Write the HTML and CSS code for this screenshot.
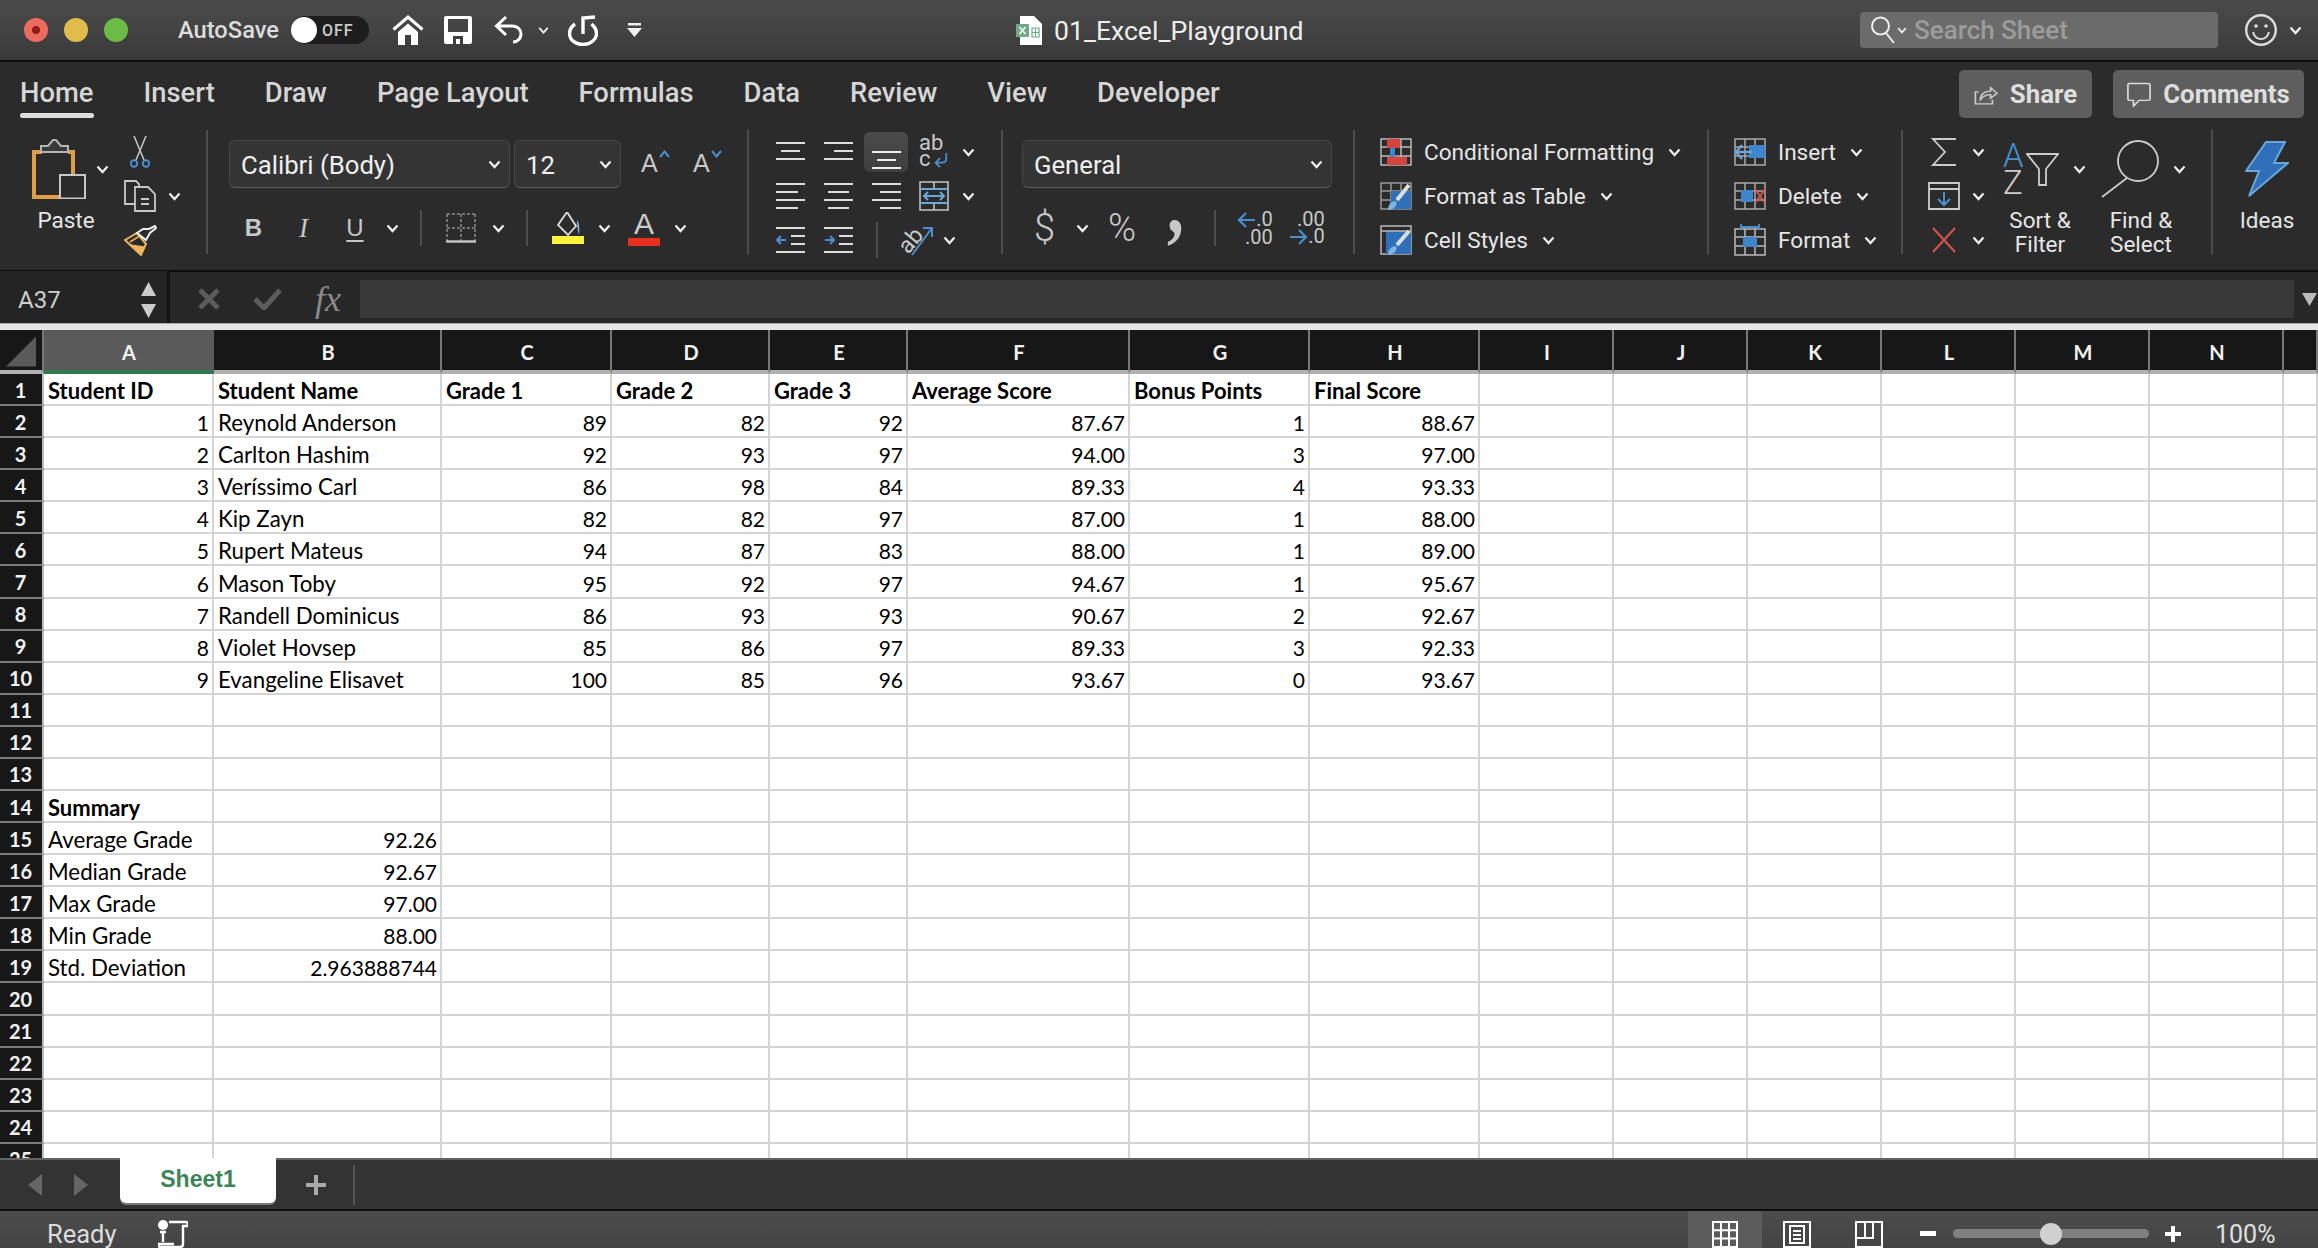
FILE: index.html
```html
<!DOCTYPE html>
<html>
<head>
    <meta charset="UTF-8">
    <title>01_Excel_Playground</title>
    <link rel="stylesheet" href="styles.css">
</head>
<body>

    <svg class="defs">
        <symbol id="chev" viewBox="0 0 13 9"><path d="M1.5 1.5 6.5 7l5-5.5" fill="none" stroke="#f0f0f0" stroke-width="2.2"/></symbol>
    </svg>

    <!-- title bar -->
    <header class="titlebar">
        <span class="light red"></span>
        <span class="light yellow"></span>
        <span class="light green"></span>
        <span class="autosave">AutoSave</span>
        <span class="toggle"><span class="knob"></span><span class="toggle-text">OFF</span></span>
        <svg class="qa-home" width="32" height="30" viewBox="0 0 32 30"><path d="M1.5 14.5 16 2l14.500 12.500" fill="none" stroke="#fff" stroke-width="3"/><path d="M6 17 16 8.500 26 17v13h-7V20h-6v10H6z" fill="#fff"/></svg>
        <svg class="qa-save" width="28" height="28" viewBox="0 0 28 28"><path fill="#fff" fill-rule="evenodd" d="M2 0h24q2 0 2 2v24q0 2-2 2H2q-2 0-2-2V2q0-2 2-2zm2 3v13h20V3zm5 25h10v-8H9zm3-5h4v5h-4z"/></svg>
        <svg class="qa-undo" width="30" height="30" viewBox="0 0 30 30"><path d="M12 2 2.500 11 12 20M3 11h15c6 0 9 4 9 8s-3 8-8 8" fill="none" stroke="#fff" stroke-width="3"/></svg>
        <svg class="chev qa-chev"><use href="#chev"/></svg>
        <svg class="qa-redo" width="30" height="31" viewBox="0 0 30 31"><path d="M7 9C3.500 11.500 1.500 15 1.500 18.500c0 6.500 6 11 13.500 11s13.500-5 13.500-11c0-4-2-7-5-9.500" fill="none" stroke="#fff" stroke-width="3.400"/><path d="M15 19V3l12-1" fill="none" stroke="#fff" stroke-width="3.400"/></svg>
        <svg class="qa-more" width="15" height="14" viewBox="0 0 15 14"><path d="M1 0h13v2.500H1zM0 5h15l-7.500 9z" fill="#eee"/></svg>

        <svg class="file-icon" width="26" height="29" viewBox="0 0 26 29"><path d="M4 0h14l8 8v21H4z" fill="#fff"/><path d="M0 8h13v13H0z" fill="#6fa987"/><path d="M3.500 11 9.500 18M9.500 11 3.500 18" stroke="#fff" stroke-width="1.500"/><path d="M16 12h7v9h-7zM19.500 12v9M16 16.500h7" fill="none" stroke="#6fa987" stroke-width="1.200"/></svg>
        <span class="doc-title">01_Excel_Playground</span>

        <div class="search">
            <svg width="24" height="28" viewBox="0 0 24 28"><circle cx="9.500" cy="10" r="8.500" fill="none" stroke="#eee" stroke-width="2"/><path d="m15 17 8 10" stroke="#eee" stroke-width="2"/></svg>
            <svg class="search-chev" width="10" height="7" viewBox="0 0 13 9"><path d="M1.500 1.500 6.500 7l5-5.500" fill="none" stroke="#eee" stroke-width="2.200"/></svg>
            <span>Search Sheet</span>
        </div>
        <svg class="smile" width="32" height="32" viewBox="0 0 32 32"><circle cx="16" cy="16" r="14.800" fill="none" stroke="#ddd" stroke-width="2.400"/><circle cx="11" cy="12" r="1.800" fill="#ddd"/><circle cx="21" cy="12" r="1.800" fill="#ddd"/><path d="M8 18c1.500 5 5 7 8 7s6.500-2 8-7" fill="none" stroke="#ddd" stroke-width="2"/></svg>
        <svg class="chev smile-chev"><use href="#chev"/></svg>
    </header>

    <section class="ribbon">
        <nav class="tabs">
            <span class="tab active">Home</span>
            <span class="tab">Insert</span>
            <span class="tab">Draw</span>
            <span class="tab">Page Layout</span>
            <span class="tab">Formulas</span>
            <span class="tab">Data</span>
            <span class="tab">Review</span>
            <span class="tab">View</span>
            <span class="tab">Developer</span>
            <span class="tab-btn share">
                <svg width="24" height="24" viewBox="0 0 26 34" preserveAspectRatio="none"><path d="M5 14H1.500v17H20v-6" fill="none" stroke="#ccc" stroke-width="1.800"/><path d="M7 25c0-8 5-12 11-12V8l7 8-7 7v-5c-5 0-8 2-11 7z" fill="none" stroke="#ccc" stroke-width="1.800"/></svg>
                Share
            </span>
            <span class="tab-btn comments">
                <svg width="24" height="25" viewBox="0 0 26 34" preserveAspectRatio="none"><path d="M3 2h20q2 0 2 2v19q0 2-2 2H13l-6 8v-8H3q-2 0-2-2V4q0-2 2-2z" fill="none" stroke="#ddd" stroke-width="1.800"/></svg>
                Comments
            </span>
        </nav>

        <div class="groups">
            <!-- clipboard -->
            <div class="group clipboard">
                <div class="big paste-big">
                    <div class="big-top">
                        <svg width="54" height="60" viewBox="0 0 54 60"><path d="M10 13H2v45h26" fill="none" stroke="#e0a04a" stroke-width="4"/><path d="M36 13h5v23" fill="none" stroke="#e0a04a" stroke-width="4"/><path d="M9 7h7l5-6h3l5 6h7v6H9z" fill="#3a3a3a" stroke="#b5b5b5" stroke-width="2"/><path d="M28 36h25v23.500H28z" fill="#2b2b2b" stroke="#c8c8c8" stroke-width="2"/></svg>
                        <svg class="chev"><use href="#chev"/></svg>
                    </div>
                    <span class="big-label">Paste</span>
                </div>
                <div class="clip-stack">
                    <svg width="20" height="32" viewBox="0 0 20 32"><path d="M4 0l10 24M16 0 6 24" fill="none" stroke="#c8c8c8" stroke-width="1.500"/><circle cx="4" cy="27.500" r="3.200" fill="none" stroke="#4a90d0" stroke-width="2"/><circle cx="16" cy="27.500" r="3.200" fill="none" stroke="#4a90d0" stroke-width="2"/></svg>
                    <div class="clip-copy">
                        <svg width="32" height="32" viewBox="0 0 32 32"><path d="M10 24H1V1h11l3 3v3" fill="none" stroke="#c8c8c8" stroke-width="1.800"/><path d="M11 7h13l7 7v17H11z" fill="none" stroke="#c8c8c8" stroke-width="1.800"/><path d="M17 19h8M17 24h8" stroke="#c8c8c8" stroke-width="1.800"/></svg>
                        <svg class="chev"><use href="#chev"/></svg>
                    </div>
                    <svg width="33" height="31" viewBox="0 0 33 31"><path d="M1 15 13 8l9 11-5 11z" fill="#2b2b2b" stroke="#eeb45e" stroke-width="2"/><path d="M6 17 17 10M7 20l10 9 3-7z" fill="#eeb45e" stroke="#eeb45e" stroke-width="1.500"/><path d="M13 8 22 15l4-7 6-5-1-2-6 3-6 0z" fill="#2b2b2b" stroke="#eee" stroke-width="2"/></svg>
                </div>
            </div>

            <!-- font -->
            <div class="group font-group">
                <div class="font-row">
                    <div class="select font-name"><span>Calibri (Body)</span><svg class="chev"><use href="#chev"/></svg></div>
                    <div class="select font-size"><span>12</span><svg class="chev"><use href="#chev"/></svg></div>
                    <span class="size-a grow">A<svg width="11" height="8" viewBox="0 0 11 8"><path d="m1 7 4.500-5.500L10 7" fill="none" stroke="#4a90d0" stroke-width="2"/></svg></span>
                    <span class="size-a shrink">A<svg width="11" height="8" viewBox="0 0 11 8"><path d="m1 1 4.500 5.500L10 1" fill="none" stroke="#4a90d0" stroke-width="2"/></svg></span>
                </div>
                <div class="format-row">
                    <span class="fmt bold">B</span>
                    <span class="fmt italic">I</span>
                    <span class="fmt under">U</span>
                    <svg class="chev"><use href="#chev"/></svg>
                    <span class="vsep"></span>
                    <svg width="30" height="30" viewBox="0 0 30 30"><path d="M1 1h28M1 15h28M1 1v28M15 1v28M29 1v28" fill="none" stroke="#8a8a8a" stroke-width="1.500" stroke-dasharray="3 2"/><path d="M0 28.500h30" stroke="#c8c8c8" stroke-width="2.400"/></svg>
                    <svg class="chev"><use href="#chev"/></svg>
                    <span class="vsep"></span>
                    <svg width="32" height="32" viewBox="0 0 32 32"><path d="M15 1 6 14l10 10 8-9z" fill="none" stroke="#ddd" stroke-width="1.800" transform="translate(0 -1)"/><path d="M25 8c2 2 3 8 2 15-1-4-2-7-2-15z" fill="#7db4e2"/><path d="M0 24h32v8H0z" fill="#fbf23f"/></svg>
                    <svg class="chev"><use href="#chev"/></svg>
                    <span class="color-a">A</span>
                    <svg class="chev"><use href="#chev"/></svg>
                </div>
            </div>

            <!-- alignment -->
            <div class="group align-group">
                <svg width="29" height="20" viewBox="0 0 29 20"><path d="M0 1h29M5 9h19M0 17h29" stroke="#ddd" stroke-width="2"/></svg>
                <svg width="29" height="20" viewBox="0 0 29 20"><path d="M0 1h29M10 9h19M0 17h29" stroke="#ddd" stroke-width="2"/></svg>
                <span class="align-on"><svg width="29" height="20" viewBox="0 0 29 20"><path d="M0 1h29M5 9h19M0 17h29" stroke="#eee" stroke-width="2"/></svg></span>
                <span class="wrap-icon"><span>ab</span><span class="wrap-c">c<svg width="17" height="16" viewBox="0 0 17 18"><path d="M15 1v6q0 5-5 5H3m5-5-5 5 5 5" fill="none" stroke="#4a90d0" stroke-width="2"/></svg></span></span>
                <svg class="chev"><use href="#chev"/></svg>

                <svg width="29" height="26" viewBox="0 0 29 26"><path d="M0 1h29M0 9h22M0 17h29M0 25h22" stroke="#ddd" stroke-width="2"/></svg>
                <svg width="29" height="26" viewBox="0 0 29 26"><path d="M0 1h29M4 9h21M0 17h29M4 25h21" stroke="#ddd" stroke-width="2"/></svg>
                <svg width="29" height="26" viewBox="0 0 29 26"><path d="M0 1h29M8 9h21M0 17h29M8 25h21" stroke="#ddd" stroke-width="2"/></svg>
                <svg width="30" height="30" viewBox="0 0 30 30"><path d="M1 1h28v28H1zM15 1v7M15 22v7" fill="none" stroke="#c8c8c8" stroke-width="1.500"/><path d="M1 8h28M1 22h28M5 15h20M9 11l-4 4 4 4M21 11l4 4-4 4" fill="none" stroke="#6aa8dc" stroke-width="2"/></svg>
                <svg class="chev"><use href="#chev"/></svg>

                <div class="align-last">
                    <svg width="29" height="26" viewBox="0 0 29 26"><path d="M0 1h29M15 9h14M15 17h14M0 25h29" stroke="#ddd" stroke-width="2"/><path d="M10 13H1m4-4-4 4 4 4" fill="none" stroke="#4a90d0" stroke-width="2"/></svg>
                    <svg width="29" height="26" viewBox="0 0 29 26"><path d="M0 1h29M15 9h14M15 17h14M0 25h29" stroke="#ddd" stroke-width="2"/><path d="M1 13h9m-4-4 4 4-4 4" fill="none" stroke="#4a90d0" stroke-width="2"/></svg>
                    <span class="vsep tall"></span>
                    <span class="orient"><span class="orient-text">ab</span><svg width="24" height="32" viewBox="0 0 24 32"><path d="M2 31 22 4m-9 0h9v9" fill="none" stroke="#4a90d0" stroke-width="2"/></svg></span>
                    <svg class="chev"><use href="#chev"/></svg>
                </div>
            </div>

            <!-- number -->
            <div class="group number-group">
                <div class="select general"><span>General</span><svg class="chev"><use href="#chev"/></svg></div>
                <div class="number-row">
                    <span class="num-sym">$</span>
                    <svg class="chev"><use href="#chev"/></svg>
                    <span class="num-sym">%</span>
                    <span class="comma">,</span>
                    <span class="vsep"></span>
                    <span class="dec-icon"><span><svg width="19" height="18" viewBox="0 0 19 18"><path d="M18 9H2m7-7L2 9l7 7" fill="none" stroke="#4a90d0" stroke-width="2.200"/></svg>.0</span><span>.00</span></span>
                    <span class="dec-icon"><span>.00</span><span><svg width="19" height="18" viewBox="0 0 19 18"><path d="M1 9h16M10 2l7 7-7 7" fill="none" stroke="#4a90d0" stroke-width="2.200"/></svg>.0</span></span>
                </div>
            </div>

            <!-- styles -->
            <div class="group styles-group">
                <div class="line-item">
                    <svg width="32" height="28" viewBox="0 0 32 28"><path d="M1 1h30v26H1zM11 1v26M21 1v26M1 9h30M1 18h30" fill="none" stroke="#bbb" stroke-width="1.500"/><path d="M7 1h13v9H7zM7 19h20v8H7z" fill="#d6453d"/><path d="M10 10h5v9h-5z" fill="#3d85cc"/></svg>
                    <span>Conditional Formatting</span><svg class="chev"><use href="#chev"/></svg>
                </div>
                <div class="line-item">
                    <svg width="32" height="28" viewBox="0 0 32 28"><path d="M1 1h30v26H1zM11 1v26M21 1v26M1 9h30M1 18h30" fill="none" stroke="#999" stroke-width="1.500"/><path d="M11 9h20v18H11z" fill="#2f6fba"/><path d="M29 3 17 18" stroke="#ddd" stroke-width="4"/><path d="M8 28c0-5 3-9 8-9 2 4-2 9-8 9z" fill="#7db4e2"/></svg>
                    <span>Format as Table</span><svg class="chev"><use href="#chev"/></svg>
                </div>
                <div class="line-item">
                    <svg width="32" height="30" viewBox="0 0 32 30"><path d="M1 1h30v28H1z" fill="none" stroke="#bbb" stroke-width="1.500"/><path d="M6 6h25v23H6z" fill="#2f6fba"/><path d="M1 6h30" stroke="#bbb" stroke-width="1.500"/><path d="M29 6 17 20" stroke="#ddd" stroke-width="4"/><path d="M8 30c0-5 3-9 8-9 2 4-2 9-8 9z" fill="#7db4e2"/></svg>
                    <span>Cell Styles</span><svg class="chev"><use href="#chev"/></svg>
                </div>
            </div>

            <!-- cells -->
            <div class="group cells-group">
                <div class="line-item">
                    <svg width="32" height="28" viewBox="0 0 32 28"><path d="M1 1h30v26H1zM11 1v26M21 1v26M1 9h30M1 18h30" fill="none" stroke="#aaa" stroke-width="1.500"/><path d="M15 7h16v13H15z" fill="#3d85cc"/><path d="M18 14H2m6-7-6 7 6 7" fill="none" stroke="#6aa8dc" stroke-width="2.400"/></svg>
                    <span>Insert</span><svg class="chev"><use href="#chev"/></svg>
                </div>
                <div class="line-item">
                    <svg width="32" height="28" viewBox="0 0 32 28"><path d="M1 1h30v26H1zM11 1v26M21 1v26M1 9h30M1 18h30" fill="none" stroke="#aaa" stroke-width="1.500"/><path d="M7 8h12v12H7z" fill="#3d85cc"/><path d="m21 7 10 14M31 7 21 21" stroke="#d9534f" stroke-width="2"/></svg>
                    <span>Delete</span><svg class="chev"><use href="#chev"/></svg>
                </div>
                <div class="line-item">
                    <svg width="32" height="32" viewBox="0 0 32 32"><path d="M1 5h30v26H1zM11 5v26M21 5v26M1 13h30M1 22h30" fill="none" stroke="#bbb" stroke-width="1.500"/><path d="M9 13h14v10H9z" fill="#3d85cc"/><path d="M7 3h18M7 0v6M25 0v6" fill="none" stroke="#4a90d0" stroke-width="1.800"/></svg>
                    <span>Format</span><svg class="chev"><use href="#chev"/></svg>
                </div>
            </div>

            <!-- editing -->
            <div class="group editing-group">
                <div class="edit-stack">
                    <svg width="26" height="28" viewBox="0 0 26 28"><path d="M25 1H2l12 13L2 27h23" fill="none" stroke="#ccc" stroke-width="1.800"/></svg>
                    <svg class="chev"><use href="#chev"/></svg>
                    <svg width="32" height="28" viewBox="0 0 32 28"><path d="M1 1h30v26H1zM1 7h30" fill="none" stroke="#ccc" stroke-width="1.800"/><path d="M16 10v13m-6-6 6 6 6-6" fill="none" stroke="#4a90d0" stroke-width="2"/></svg>
                    <svg class="chev"><use href="#chev"/></svg>
                    <svg width="26" height="26" viewBox="0 0 26 26"><path d="m2 1 22 24M24 1 2 25" stroke="#d9534f" stroke-width="2"/></svg>
                    <svg class="chev"><use href="#chev"/></svg>
                </div>
                <div class="big sort-big">
                    <div class="big-top">
                        <span class="az"><span class="az-a">A</span><span>Z</span></span>
                        <svg class="funnel" width="33" height="33" viewBox="0 0 33 33"><path d="M1 1h31L20 16v16h-7V16z" fill="none" stroke="#ccc" stroke-width="1.800"/></svg>
                        <svg class="chev"><use href="#chev"/></svg>
                    </div>
                    <span class="big-label">Sort &amp;<br>Filter</span>
                </div>
                <div class="big find-big">
                    <div class="big-top">
                        <svg width="58" height="58" viewBox="0 0 58 58"><circle cx="37" cy="21" r="20" fill="none" stroke="#ccc" stroke-width="1.800"/><path d="M26 38 1 57" stroke="#ccc" stroke-width="1.800"/></svg>
                        <svg class="chev"><use href="#chev"/></svg>
                    </div>
                    <span class="big-label">Find &amp;<br>Select</span>
                </div>
            </div>

            <!-- ideas -->
            <div class="group ideas-group">
                <div class="big ideas-big">
                    <div class="big-top">
                        <svg width="44" height="56" viewBox="0 0 44 56"><path d="M21 1h19L29 22h14L4 55l10-25H1z" fill="#2f6fba" stroke="#6aa8dc" stroke-width="2"/></svg>
                    </div>
                    <span class="big-label">Ideas</span>
                </div>
            </div>
        </div>
    </section>

    <!-- formula bar -->
    <section class="formula-bar">
        <div class="name-box">
            <span>A37</span>
            <span class="name-arrows"><svg width="15" height="14" viewBox="0 0 15 14"><path d="M7.500 0 15 14H0z" fill="#ccc"/></svg><svg width="15" height="14" viewBox="0 0 15 14"><path d="M7.500 14 15 0H0z" fill="#ccc"/></svg></span>
        </div>
        <svg class="fx-cancel" width="22" height="22" viewBox="0 0 22 22"><path d="m2 2 18 18M20 2 2 20" stroke="#5c5c5c" stroke-width="5"/></svg>
        <svg class="fx-ok" width="30" height="22" viewBox="0 0 30 22"><path d="m2 11 9 9L27 2" fill="none" stroke="#5c5c5c" stroke-width="5"/></svg>
        <span class="fx">fx</span>
        <div class="formula-input"></div>
        <svg class="fx-down" width="15" height="13" viewBox="0 0 15 13"><path d="M0 0h15L7.500 13z" fill="#bbb"/></svg>
    </section>
    <div class="split"></div>

    <main id="sheet" class="sheet"></main>

    <!-- sheet tabs -->
    <section class="tabbar">
        <svg class="tab-prev" width="14" height="22" viewBox="0 0 14 22"><path d="M14 0v22L0 11z" fill="#666"/></svg>
        <svg class="tab-next" width="14" height="22" viewBox="0 0 14 22"><path d="M0 0v22l14-11z" fill="#666"/></svg>
        <span class="sheet-tab">Sheet1</span>
        <svg class="tab-add" width="20" height="20" viewBox="0 0 20 20"><path d="M10 0v20M0 10h20" stroke="#aaa" stroke-width="4"/></svg>
        <span class="tab-sep"></span>
    </section>

    <!-- status bar -->
    <footer class="statusbar">
        <span class="ready">Ready</span>
        <svg class="macro" width="30" height="28" viewBox="0 0 30 28"><circle cx="5" cy="5" r="5" fill="#fff"/><path d="M11 2h17q2 0 2 4h-5v18q0 3-3 3H3q-3 0-3-3h16M5 12v10M2 12h6" fill="none" stroke="#fff" stroke-width="2.400"/></svg>
        <div class="view-on">
            <svg width="26" height="27" viewBox="0 0 26 27"><path d="M1 1h24v25H1zM9 1v25M17 1v25M1 9.300h24M1 17.600h24" fill="none" stroke="#fff" stroke-width="2"/></svg>
        </div>
        <svg class="view-page" width="28" height="27" viewBox="0 0 28 27"><path d="M1 1h26v25H1z" fill="none" stroke="#fff" stroke-width="2"/><path d="M7 5h14v17H7zM10 10h8M10 14h8M10 18h8" fill="none" stroke="#fff" stroke-width="2"/></svg>
        <svg class="view-break" width="28" height="27" viewBox="0 0 28 27"><path d="M1 1h26v25H1zM1 17h17V1M10 1v16" fill="none" stroke="#fff" stroke-width="2"/></svg>
        <svg class="zoom-minus" width="16" height="5" viewBox="0 0 16 5"><path d="M0 0h16v5H0z" fill="#fff"/></svg>
        <div class="slider"><span class="slider-knob"></span></div>
        <svg class="zoom-plus" width="16" height="16" viewBox="0 0 16 16"><path d="M8 0v16M0 8h16" stroke="#fff" stroke-width="4"/></svg>
        <span class="zoom-level">100%</span>
    </footer>

    <script src="script.js"></script>
</body>
</html>
```

FILE: styles.css
```css
* {
    box-sizing: border-box;
}

html, body {
    margin: 0;
    height: 100%;
    overflow: hidden;
}

body {
    display: flex;
    flex-direction: column;
    font-family: Roboto, "Liberation Sans", sans-serif;
    color: #e6e6e6;
    background: #2b2b2b;
}

svg {
    display: block;
    flex: none;
}

.defs {
    width: 0;
    height: 0;
    position: absolute;
}

.chev {
    width: 13px;
    height: 9px;
}

/* title bar */
.titlebar {
    display: flex;
    align-items: center;
    height: 62px;
    flex: none;
    padding: 0 16px 0 24px;
    background: linear-gradient(#4b4b4b, #3a3a3a);
    border-bottom: 2px solid #0f0f0f;
}

.light {
    width: 24px;
    height: 24px;
    border-radius: 50%;
    margin-right: 16px;
}

.red {
    background: radial-gradient(#8c1f1a 22%, #ee6a5f 26%);
}

.yellow {
    background: #e0bd4a;
}

.green {
    background: #6cbb45;
    margin-right: 50px;
}

.autosave {
    font-size: 23.700px;
    font-weight: 500;
    color: #dcdcdc;
    width: 113px;
    white-space: nowrap;
}

.toggle {
    display: flex;
    align-items: center;
    width: 78px;
    height: 28px;
    border-radius: 14px;
    background: #1d1d1d;
}

.knob {
    width: 26px;
    height: 26px;
    border-radius: 50%;
    background: #fff;
}

.toggle-text {
    font-size: 16px;
    font-weight: 500;
    letter-spacing: 1px;
    margin-left: 5px;
    color: #ccc;
}

.qa-home {
    margin-left: 23px;
}

.qa-save {
    margin-left: 20px;
}

.qa-undo {
    margin-left: 22px;
}

.qa-chev {
    margin-left: 14px;
    width: 11px;
}

.qa-redo {
    margin-left: 19px;
}

.qa-more {
    margin-left: 29px;
}

.file-icon {
    margin-left: 374px;
}

.doc-title {
    font-size: 26.600px;
    margin-left: 12px;
    color: #eee;
}

.search {
    display: flex;
    align-items: center;
    width: 358px;
    height: 36px;
    margin-left: auto;
    padding-left: 11px;
    border-radius: 4px;
    background: #6b6b6b;
    font-size: 26px;
    font-weight: 500;
    color: #9c9c9c;
}

.search-chev {
    margin: 0 7px 0 2px;
}

.smile {
    margin-left: 27px;
}

.smile-chev {
    margin-left: 12px;
}

/* ribbon */
.ribbon {
    height: 210px;
    flex: none;
    background: #2b2b2b;
    border-bottom: 2px solid #0c0c0c;
}

.tabs {
    display: flex;
    align-items: flex-end;
    gap: 50px;
    height: 56px;
    padding: 0 14px 0 20px;
}

.tab {
    font-size: 27.400px;
    font-weight: 500;
    line-height: 30px;
    color: #d6d6d6;
    padding-top: 16px;
}

.tab::after {
    content: "";
    display: block;
    height: 5px;
    margin-top: 5px;
    border-radius: 3px;
}

.tab.active::after {
    background: #dcdcdc;
}

.tab-btn {
    display: flex;
    align-items: center;
    justify-content: center;
    gap: 12px;
    height: 48px;
    border-radius: 5px;
    background: #5e5e5e;
    font-size: 25.800px;
    font-weight: 700;
    color: #dedede;
}

.share {
    width: 133px;
    margin-left: auto;
}

.comments {
    width: 191px;
    margin-left: -29px;
}

.groups {
    display: flex;
    height: 124px;
    margin-top: 12px;
}

.group {
    flex: none;
    border-left: 2px solid #4c4c4c;
    font-size: 22.600px;
}

.big {
    display: flex;
    flex-direction: column;
}

.big-top {
    display: flex;
    align-items: center;
    gap: 14px;
    height: 58px;
    flex: none;
    margin-top: 10px;
}

.big-label {
    font-size: 22.500px;
    line-height: 24px;
    margin-top: 10px;
    text-align: center;
    color: #e6e6e6;
}

.clipboard {
    display: flex;
    width: 206px;
    border-left: 0;
    padding-left: 32px;
}

.paste-big {
    width: 70px;
}

.paste-big .big-top {
    gap: 10px;
}

.paste-big .big-label {
    margin-right: 2px;
}

.clip-stack {
    display: grid;
    grid-template-rows: repeat(3, 44px);
    align-items: center;
    margin-left: 22px;
}

.clip-copy {
    display: flex;
    align-items: center;
    gap: 12px;
}

.clip-stack > svg:first-child {
    margin-left: 6px;
}

/* font */
.font-group {
    width: 541px;
    padding: 10px 0 0 21px;
}

.font-row {
    display: flex;
    align-items: center;
    gap: 4px;
}

.select {
    display: flex;
    align-items: center;
    justify-content: space-between;
    height: 48px;
    padding: 2px 8px 0 11px;
    background: #343434;
    border: 1px solid #474747;
    border-bottom-color: #5a5a5a;
    border-radius: 6px;
    font-size: 25.700px;
    color: #efefef;
}

.select .chev {
    margin-top: -2px;
}

.font-name {
    width: 281px;
}

.font-size {
    width: 107px;
}

.size-a {
    display: flex;
    align-items: flex-start;
    font-size: 25px;
    color: #c8c8c8;
    width: 26px;
    font-family: "Liberation Sans", sans-serif;
    margin-bottom: 2px;
}

.size-a svg {
    margin: 1px 0 0 1px;
}

.grow {
    margin-left: 16px;
}

.shrink {
    margin-left: 22px;
}

.format-row {
    display: grid;
    grid-template-columns: 49px 51px 52px 22px 36px 44px 30px 28px 54px 18px 62px 10px;
    justify-items: center;
    align-items: center;
    height: 36px;
    margin-top: 22px;
}

.fmt {
    font-family: "Liberation Sans", sans-serif;
    font-size: 24px;
    color: #c8c8c8;
}

.bold {
    font-weight: 700;
}

.italic {
    font-family: "Liberation Serif", serif;
    font-style: italic;
    font-size: 27px;
}

.under {
    text-decoration: underline;
    text-underline-offset: 4px;
}

.vsep {
    width: 2px;
    height: 36px;
    background: #4c4c4c;
}

.color-a {
    font-family: "Liberation Sans", sans-serif;
    font-size: 30px;
    line-height: 28px;
    width: 32px;
    text-align: center;
    color: #ccc;
    border-bottom: 8px solid #e8301f;
}

/* alignment */
.align-group {
    width: 254px;
    padding-left: 17px;
    display: grid;
    grid-template-columns: 48px 48px 48px 48px 20px;
    grid-template-rows: repeat(3, 44px);
    justify-items: center;
    align-items: center;
    align-content: start;
    height: 124px;
}

.align-on {
    display: flex;
    align-items: center;
    justify-content: center;
    width: 44px;
    height: 40px;
    padding-top: 18px;
    border-radius: 6px;
    background: linear-gradient(#4a4a4a, #3f3f3f);
}

.wrap-icon {
    display: flex;
    flex-direction: column;
    font-size: 22px;
    line-height: 15px;
    color: #c8c8c8;
    width: 30px;
    margin-top: -2px;
}

.wrap-c {
    display: flex;
    align-items: center;
}

.wrap-c svg {
    margin: 2px 0 0 1px;
}

.align-last {
    grid-column: 1 / -1;
    display: grid;
    grid-template-columns: 48px 48px 30px 48px 18px;
    justify-items: center;
    align-items: center;
    justify-self: start;
}

.orient {
    display: flex;
    align-items: center;
}

.orient-text {
    font-size: 23px;
    color: #c8c8c8;
    transform: rotate(-50deg);
    margin-right: -13px;
}

/* number */
.number-group {
    width: 352px;
    padding: 10px 0 0 19px;
}

.general {
    width: 310px;
}

.number-row {
    display: grid;
    grid-template-columns: 45px 30px 50px 56px 24px 56px 48px;
    justify-items: center;
    align-items: center;
    height: 36px;
    margin-top: 22px;
}

.num-sym {
    font-weight: 300;
    font-size: 38px;
    line-height: 36px;
    color: #c8c8c8;
}

.comma {
    font-family: "Liberation Serif", serif;
    font-size: 84px;
    font-weight: 700;
    line-height: 28px;
    color: #c8c8c8;
    transform: translateY(-24px) scaleX(0.8);
}

.dec-icon {
    display: flex;
    flex-direction: column;
    align-items: flex-end;
    font-size: 20px;
    line-height: 17px;
    color: #c8c8c8;
}

.dec-icon span {
    display: flex;
    align-items: center;
}

/* styles and cells */
.styles-group {
    width: 354px;
    padding-left: 25px;
}

.cells-group {
    width: 194px;
    padding-left: 25px;
}

.line-item {
    display: flex;
    align-items: center;
    height: 44px;
    color: #e6e6e6;
}

.line-item span {
    margin-left: 12px;
    white-space: nowrap;
}

.line-item .chev {
    margin-left: 14px;
}

/* editing */
.editing-group {
    display: flex;
    width: 310px;
    padding-left: 25px;
}

.edit-stack {
    display: grid;
    grid-template-columns: 32px 13px;
    grid-template-rows: repeat(3, 44px);
    column-gap: 12px;
    justify-items: center;
    align-items: center;
    width: 62px;
}

.az {
    display: flex;
    flex-direction: column;
    width: 20px;
    font-size: 33px;
    font-weight: 300;
    line-height: 27px;
    color: #ccc;
}

.az-a {
    color: #4a90d0;
}

.funnel {
    margin: 0 0 0 3px;
}

.sort-big {
    width: 100px;
}

.sort-big .big-top {
    padding-left: 13px;
    gap: 0;
}

.sort-big .chev {
    margin-left: 14px;
}

.find-big {
    width: 102px;
}

.find-big .big-top {
    padding-left: 11px;
}

.ideas-group {
    width: 105px;
}

.ideas-big {
    width: 108px;
}

.ideas-big .big-top {
    justify-content: center;
}

/* formula bar */
.formula-bar {
    display: flex;
    align-items: center;
    height: 51px;
    flex: none;
    padding-top: 3px;
    background: #272727;
}

.name-box {
    display: flex;
    align-items: center;
    justify-content: space-between;
    width: 170px;
    height: 54px;
    margin-top: -3px;
    padding: 4px 11px 0 18px;
    background: #242424;
    border-right: 3px solid #141414;
    font-size: 24px;
    color: #cfcfcf;
}

.name-arrows {
    display: flex;
    flex-direction: column;
    gap: 8px;
}

.fx-cancel {
    margin-left: 28px;
}

.fx-ok {
    margin-left: 33px;
}

.fx {
    font-family: "Liberation Serif", serif;
    font-style: italic;
    font-size: 36px;
    color: #8a8a8a;
    margin-left: 32px;
    width: 34px;
}

.formula-input {
    height: 38px;
    width: 1934px;
    margin-left: 11px;
    background: #383838;
}

.fx-down {
    margin-left: 8px;
}

.split {
    height: 7px;
    flex: none;
    background: #e6e6e6;
    border-top: 1px solid #aaa;
}

/* the grid */
.sheet {
    flex: 1;
    min-height: 0;
    overflow: hidden;
    display: grid;
    grid-template-columns: 44px 170px 228px 170px 158px 138px 222px 180px 170px 134px 134px 134px 134px 134px 134px 1fr;
    grid-auto-rows: 32.080px;
    grid-template-rows: 44px;
    align-content: start;
    background: #fff;
    font-family: Lato, "Noto Sans", sans-serif;
    font-size: 22.300px;
    color: #000;
}

.cell {
    display: flex;
    align-items: center;
    padding: 3px 3px 0 4px;
    border-right: 2px solid #d4d4d4;
    border-bottom: 2px solid #d4d4d4;
    white-space: nowrap;
}

.cell.num {
    justify-content: flex-end;
    font-size: 21px;
}

.cell.strong {
    font-weight: 700;
    font-size: 22px;
    padding-top: 2px;
}

.head {
    display: flex;
    align-items: center;
    justify-content: center;
    padding: 3px 0 0 2px;
    background: #171717;
    color: #f2f2f2;
    font-weight: 700;
    font-size: 20px;
    border-right: 2px solid #777;
    border-bottom: 4px solid #b0b0b0;
}

.head.selected {
    background: #5a5a5a;
    border-right-color: #5a5a5a;
    border-bottom-color: #2f7a4f;
}

.corner::after {
    content: "";
    width: 30px;
    height: 30px;
    background: #5a5a5a;
    clip-path: polygon(100% 0, 100% 100%, 0 100%);
    margin: 0 0 0 -2px;
}

.row-head {
    display: flex;
    align-items: center;
    justify-content: center;
    padding: 1px 1px 0 0;
    background: #171717;
    color: #f2f2f2;
    font-weight: 700;
    font-size: 20px;
    border-right: 2px solid #bdbdbd;
    border-bottom: 2px solid #7a7a7a;
}

/* sheet tabs */
.tabbar {
    display: flex;
    align-items: center;
    height: 53px;
    flex: none;
    background: #333;
    border-top: 2px solid #636363;
    border-bottom: 2px solid #0d0d0d;
}

.tab-prev {
    margin-left: 28px;
}

.tab-next {
    margin-left: 32px;
}

.sheet-tab {
    align-self: flex-start;
    width: 156px;
    height: 45px;
    margin: -2px 0 0 32px;
    padding-top: 8px;
    background: #fff;
    border-radius: 0 0 6px 6px;
    box-shadow: 0 2px 0 #777;
    text-align: center;
    font-family: "Liberation Sans", sans-serif;
    font-size: 23px;
    font-weight: 700;
    color: #3d8456;
}

.tab-add {
    margin-left: 30px;
}

.tab-sep {
    width: 2px;
    height: 40px;
    margin-left: 27px;
    background: #555;
}

/* status bar */
.statusbar {
    display: flex;
    align-items: center;
    height: 37px;
    flex: none;
    background: linear-gradient(#4c4c4c, #444);
    overflow: hidden;
}

.ready {
    font-size: 25.500px;
    color: #dcdcdc;
    margin-left: 47px;
    width: 111px;
    padding-top: 9px;
}

.macro {
    margin-top: 8px;
}

.view-on {
    display: flex;
    justify-content: center;
    align-items: center;
    width: 74px;
    height: 100%;
    margin-left: 1500px;
    padding-top: 9px;
    background: #5c5c5c;
}

.view-page {
    margin: 9px 0 0 21px;
}

.view-break {
    margin: 9px 0 0 44px;
}

.zoom-minus {
    margin: 8px 0 0 37px;
}

.slider {
    display: flex;
    align-items: center;
    width: 196px;
    height: 9px;
    margin: 8px 0 0 17px;
    padding-left: 87px;
    border-radius: 5px;
    background: #808080;
}

.slider-knob {
    width: 22px;
    height: 22px;
    border-radius: 50%;
    background: #d0d0d0;
    flex: none;
}

.zoom-plus {
    margin: 8px 0 0 16px;
}

.zoom-level {
    font-size: 25px;
    color: #e0e0e0;
    margin-left: 34px;
    padding-top: 9px;
}
```

FILE: script.js
```js
const columns = ['A', 'B', 'C', 'D', 'E', 'F', 'G', 'H', 'I', 'J', 'K', 'L', 'M', 'N', ''];
const nRows = 25;

// text goes left, numbers go right
const students = [
    [1, 'Reynold Anderson', 89, 82, 92, '87.67', 1, '88.67'],
    [2, 'Carlton Hashim', 92, 93, 97, '94.00', 3, '97.00'],
    [3, 'Veríssimo Carl', 86, 98, 84, '89.33', 4, '93.33'],
    [4, 'Kip Zayn', 82, 82, 97, '87.00', 1, '88.00'],
    [5, 'Rupert Mateus', 94, 87, 83, '88.00', 1, '89.00'],
    [6, 'Mason Toby', 95, 92, 97, '94.67', 1, '95.67'],
    [7, 'Randell Dominicus', 86, 93, 93, '90.67', 2, '92.67'],
    [8, 'Violet Hovsep', 85, 86, 97, '89.33', 3, '92.33'],
    [9, 'Evangeline Elisavet', 100, 85, 96, '93.67', 0, '93.67']
];

const data = {
    1: ['Student ID', 'Student Name', 'Grade 1', 'Grade 2', 'Grade 3', 'Average Score', 'Bonus Points', 'Final Score'],
    14: ['Summary'],
    15: ['Average Grade', '92.26'],
    16: ['Median Grade', '92.67'],
    17: ['Max Grade', '97.00'],
    18: ['Min Grade', '88.00'],
    19: ['Std. Deviation', '2.963888744']
};
students.forEach((s, i) => { data[i + 2] = s; });

const sheet = document.getElementById('sheet');

function addCell(className, text) {
    const div = document.createElement('div');
    div.className = className;
    if (text !== undefined) div.textContent = text;
    sheet.appendChild(div);
}

addCell('head corner');
columns.forEach((c, i) => addCell(i === 0 ? 'head selected' : 'head', c));

for (let r = 1; r <= nRows; r++) {
    addCell('row-head', r);
    const row = data[r] || [];
    columns.forEach((c, i) => {
        const value = row[i];
        let cls = 'cell';
        if (r === 1 || r === 14) cls += ' strong';
        if (typeof value === 'number' || /^[\d.]+$/.test(value)) cls += ' num';
        addCell(cls, value);
    });
}
```
